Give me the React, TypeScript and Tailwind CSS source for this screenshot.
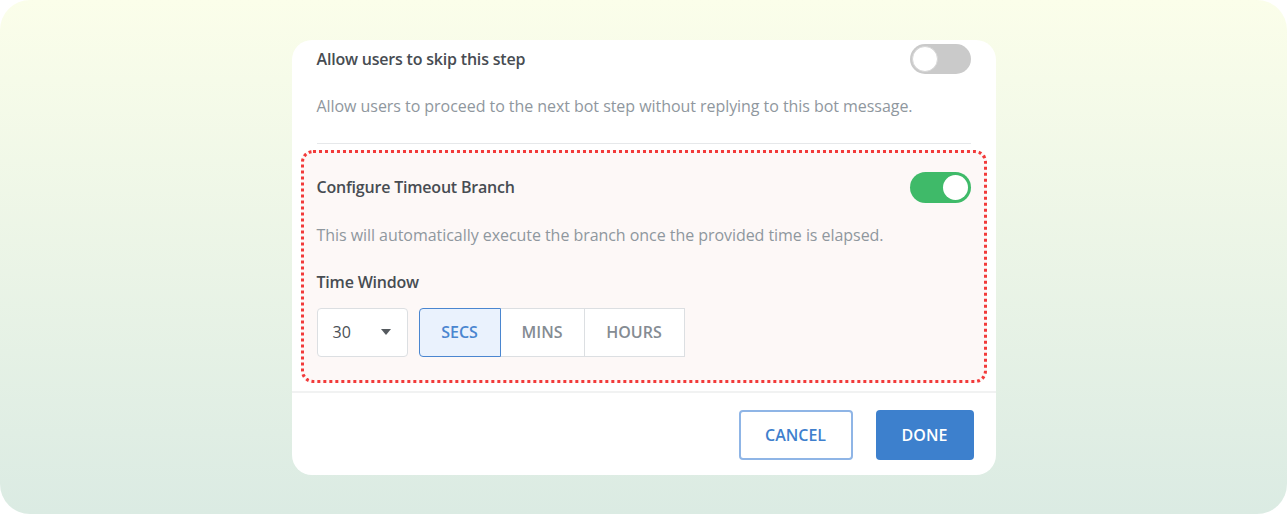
import React from "react";

const font = { fontFamily: "'Open Sans', Lato, sans-serif" };

function Toggle({ on }: { on: boolean }) {
  return on ? (
    <div className="w-[61px] h-[31px] rounded-full bg-[#3fba69] flex items-center justify-end p-[3px]">
      <div className="w-[25px] h-[25px] rounded-full bg-white" />
    </div>
  ) : (
    <div className="w-[61px] h-[30px] rounded-full bg-[#cacaca] flex items-center justify-start p-[2px]">
      <div className="w-[26px] h-[26px] rounded-full bg-white border border-[#d6d6d6]" />
    </div>
  );
}

export default function App() {
  return (
    <div className="w-full h-[514px] bg-white" style={font}>
      <div className="w-full h-full rounded-[30px] bg-gradient-to-b from-[#fbfeea] to-[#dbebe3] flex items-center justify-center">
        <div className="w-[704px] h-[435px] bg-white rounded-[20px] flex flex-col overflow-hidden">
          <div className="px-[9px]">
            <div className="px-4 pt-[4px]">
              <div className="flex items-center justify-between h-[30px]">
                <span className="text-[16px] font-semibold tracking-[-0.2px] text-[#474c52]">Allow users to skip this step</span>
                <Toggle on={false} />
              </div>
              <p className="mt-[22px] text-[16px] leading-[20px] tracking-[-0.05px] text-[#8f979e]">
                Allow users to proceed to the next bot step without replying to this bot message.
              </p>
              <div className="mt-[27px] h-px bg-[#e6e8ea]" />
            </div>
            <div className="mt-[6px] h-[233px] rounded-[12px] border-[3px] border-dotted border-[#f23a3a] bg-[#fdf8f7] px-[13px] pt-[19px]">
              <div className="flex items-center justify-between h-[31px]">
                <span className="text-[16px] font-semibold tracking-[-0.2px] text-[#474c52]">Configure Timeout Branch</span>
                <Toggle on={true} />
              </div>
              <p className="mt-[22px] text-[16px] leading-[20px] tracking-[-0.05px] text-[#8f979e]">
                This will automatically execute the branch once the provided time is elapsed.
              </p>
              <p className="mt-[27px] text-[16px] leading-[20px] font-semibold tracking-[-0.2px] text-[#474c52]">Time Window</p>
              <div className="mt-[16px] flex items-center">
                <div className="w-[91px] h-[49px] bg-white border border-[#dcdfe2] rounded-[4px] flex items-center justify-between pl-[15px] pr-[16px]">
                  <span className="text-[16px] text-[#4b5055]">30</span>
                  <svg width="10" height="6" viewBox="0 0 10 6"><path d="M0 0h10L5 6z" fill="#555a5f" /></svg>
                </div>
                <div className="ml-[11px] flex h-[49px]">
                  <div className="w-[82px] h-full rounded-l-[4px] border border-[#4a86d0] bg-[#eaf2fd] flex items-center justify-center text-[16px] font-semibold text-[#4a86d0]">
                    SECS
                  </div>
                  <div className="w-[84px] h-full border-y border-r border-[#dcdfe2] bg-white flex items-center justify-center text-[16px] font-semibold text-[#858c93]">
                    MINS
                  </div>
                  <div className="w-[100px] h-full border-y border-r border-[#dcdfe2] bg-white flex items-center justify-center text-[16px] font-semibold text-[#858c93]">
                    HOURS
                  </div>
                </div>
              </div>
            </div>
          </div>
          <div className="mt-[8px] h-[2px] bg-[#f1f2f2]" />
          <div className="flex justify-end gap-[23px] pr-[22px] mt-[17px]">
            <button className="w-[114px] h-[50px] rounded-[4px] border-2 border-[#8fb5e6] bg-white text-[16px] font-semibold text-[#3f7fcd]">
              CANCEL
            </button>
            <button className="w-[98px] h-[50px] rounded-[4px] bg-[#3d80cd] text-[16px] font-semibold text-white">
              DONE
            </button>
          </div>
        </div>
      </div>
    </div>
  );
}
